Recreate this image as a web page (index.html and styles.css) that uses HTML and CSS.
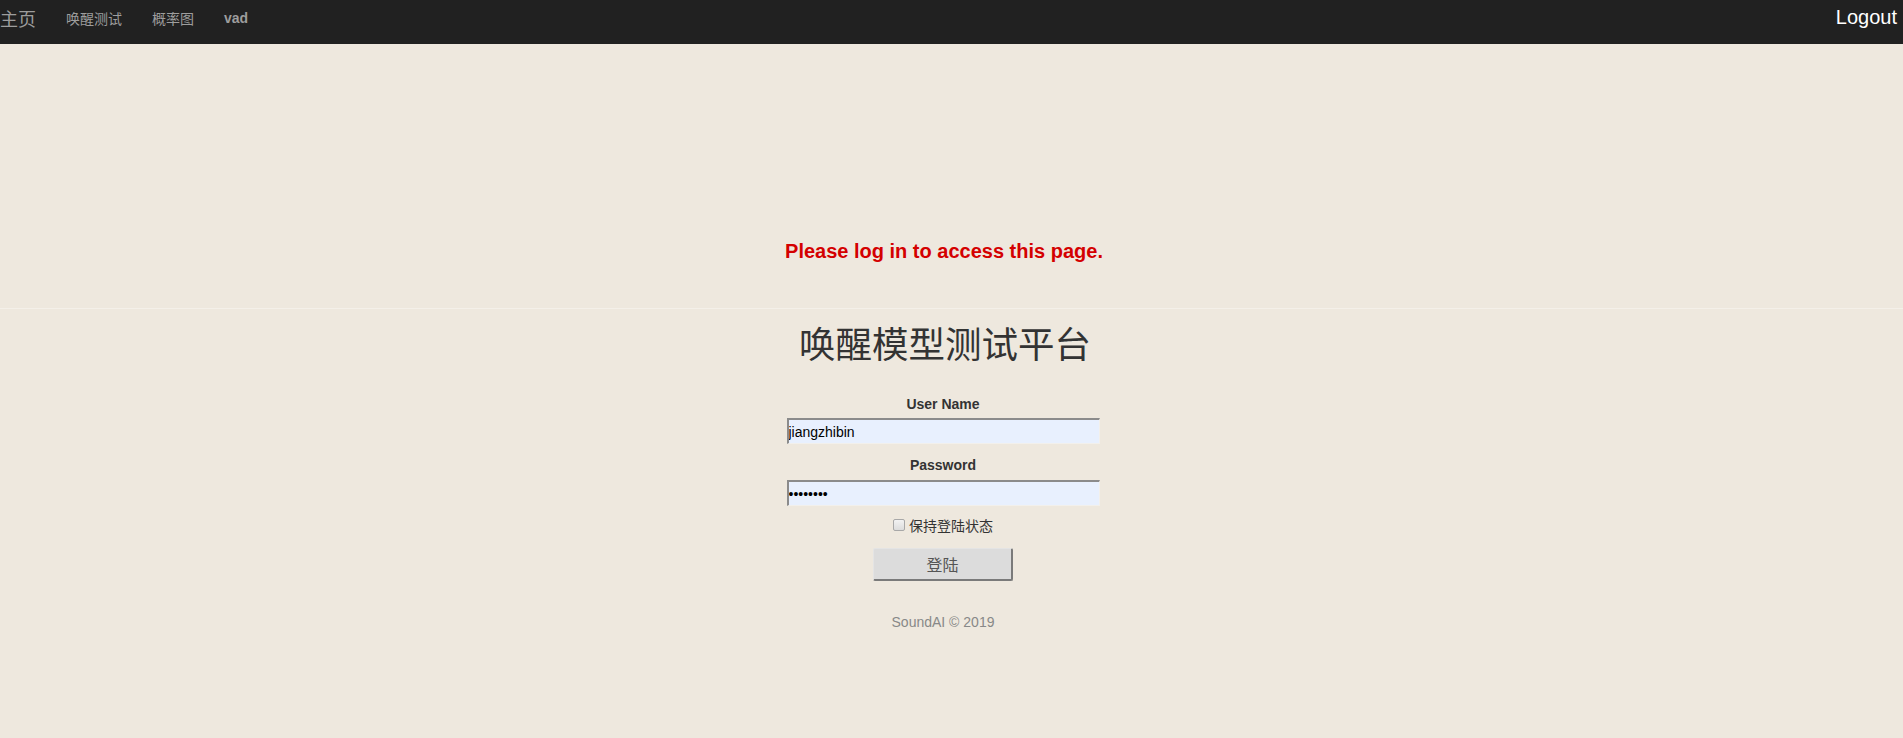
FILE: index.html
```html
<!DOCTYPE html>
<html lang="zh-CN">
<head>
<meta charset="utf-8">
<title>唤醒模型测试平台</title>
<link rel="stylesheet" href="styles.css">
</head>
<body>
<nav class="navbar">
  <div class="nav-left">
    <a class="brand" href="#">主页</a>
    <a class="nav-link" href="#">唤醒测试</a>
    <a class="nav-link" href="#">概率图</a>
    <a class="nav-link bold" href="#">vad</a>
  </div>
  <a class="logout" href="#">Logout</a>
</nav>
<main class="page">
  <section class="notice">
    <p class="flash">Please log in to access this page.</p>
  </section>
  <section class="login">
    <h1 class="title">唤醒模型测试平台</h1>
    <form class="login-form">
      <label class="field-label" for="username">User Name</label>
      <input class="field-input" id="username" type="text" value="jiangzhibin">
      <label class="field-label second" for="password">Password</label>
      <input class="field-input pw" id="password" type="password" value="12345678">
      <div class="remember">
        <span class="check"></span>
        <span class="remember-text">保持登陆状态</span>
      </div>
      <button class="submit" type="button">登陆</button>
    </form>
    <p class="footer">SoundAI © 2019</p>
  </section>
</main>
</body>
</html>
```
FILE: styles.css
```css
* { box-sizing: border-box; }

html, body {
  margin: 0;
  padding: 0;
  background: #eee8de;
  font-family: "Liberation Sans", Arial, "Noto Sans CJK SC", sans-serif;
  color: #333;
}

.navbar {
  height: 44px;
  background: #212121;
  display: flex;
  justify-content: space-between;
  align-items: flex-start;
}

.nav-left {
  display: flex;
  align-items: flex-start;
}

.nav-left a {
  text-decoration: none;
  color: #9d9d9d;
  font-family: "Noto Sans CJK SC", "Liberation Sans", sans-serif;
  height: 36px;
  line-height: 36px;
}

.brand {
  font-size: 18px;
  padding: 0 15px 0 0;
}

.nav-link {
  font-size: 14px;
  padding: 0 15px;
}

.nav-link.bold {
  font-weight: bold;
  font-family: "Liberation Sans", Arial, sans-serif;
}

.logout {
  color: #fff;
  text-decoration: none;
  font-size: 20px;
  line-height: 34px;
  padding-right: 6px;
  font-family: "Liberation Sans", Arial, sans-serif;
}

.notice {
  height: 265px;
  padding-right: 17px;
  border-bottom: 1px solid #f4f0e9;
  display: flex;
  justify-content: center;
  align-items: flex-end;
}

.flash {
  margin: 0 0 45px 2px;
  color: #d40000;
  font-weight: bold;
  font-size: 20px;
  line-height: 24px;
}

.login {
  padding-right: 17px;
  display: flex;
  flex-direction: column;
  align-items: center;
}

.title {
  margin: 8px 0 0 0;
  padding-left: 4px;
  font-family: "Noto Sans CJK SC", sans-serif;
  font-weight: normal;
  font-size: 36.5px;
  line-height: 52px;
  color: #333;
}

.login-form {
  display: flex;
  flex-direction: column;
  align-items: center;
  margin-top: 25px;
}

.field-label {
  font-size: 14px;
  font-weight: bold;
  line-height: 20px;
  color: #333;
}

.field-label.second {
  margin-top: 11px;
}

.field-input {
  margin-top: 4px;
  width: 313px;
  height: 26px;
  background: #e8f0fe;
  border-style: solid;
  border-width: 2px 1px 1px 2px;
  border-color: #8b8b8b #f2f0ec #f2f0ec #8b8b8b;
  padding: 0;
  font-family: "Liberation Sans", Arial, sans-serif;
  font-size: 14px;
  color: #000;
  outline: none;
}

.field-input.pw {
  margin-top: 5px;
  font-size: 14px;
}

.remember {
  margin-top: 9px;
  height: 20px;
  display: flex;
  align-items: center;
  gap: 4px;
}

.check {
  width: 12px;
  height: 12px;
  border: 1px solid #a8a8a8;
  border-radius: 2px;
  background: linear-gradient(#f2f2f2, #dcdcdc);
}

.remember-text {
  font-family: "Noto Sans CJK SC", sans-serif;
  font-size: 14px;
  line-height: 20px;
  color: #333;
}

.submit {
  margin-top: 13px;
  width: 140px;
  height: 33px;
  background: #dcdcdc;
  border-style: solid;
  border-width: 1px 2px 2px 1px;
  border-color: #e4e4e4 #7a7a7a #7a7a7a #e4e4e4;
  border-radius: 2px;
  font-family: "Noto Sans CJK SC", sans-serif;
  font-size: 16px;
  color: #555;
  padding: 0;
}

.footer {
  margin: 31px 0 0 0;
  font-size: 14px;
  line-height: 20px;
  color: #888;
}
```
